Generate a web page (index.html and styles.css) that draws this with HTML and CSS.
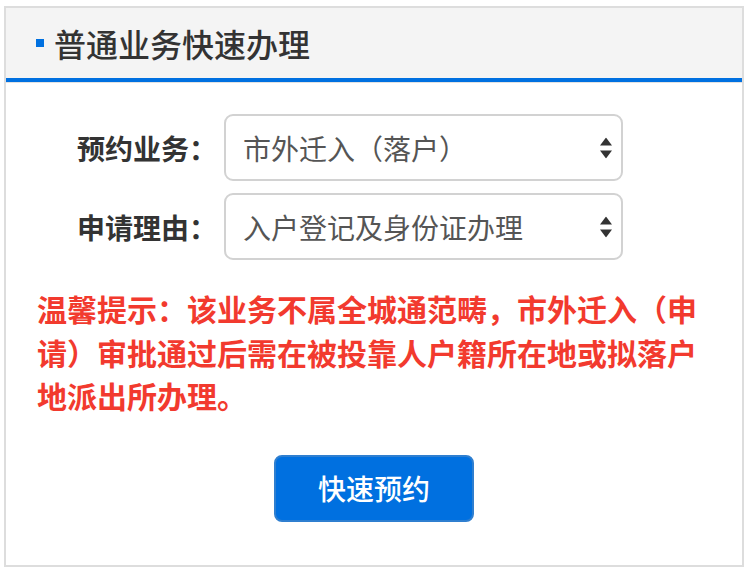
FILE: index.html
```html
<!DOCTYPE html>
<html lang="zh-CN">
<head>
    <meta charset="UTF-8">
    <meta name="viewport" content="width=device-width, initial-scale=1.0">
    <title>普通业务快速办理</title>
    <link rel="stylesheet" href="styles.css">
</head>
<body>
    <div class="panel">
        <!-- 标题 -->
        <div class="panel-head">
            <span class="mark"></span>
            <h2>普通业务快速办理</h2>
        </div>

        <div class="panel-body">
            <form class="booking">
                <div class="row">
                    <label for="business">预约业务：</label>
                    <div class="select-wrap">
                        <select id="business" name="business">
                            <option>市外迁入（落户）</option>
                        </select>
                        <svg class="arrows" width="12" height="21" viewBox="0 0 12 21">
                            <polygon points="0,8 6,0 12,8"/>
                            <polygon points="0,13 12,13 6,21"/>
                        </svg>
                    </div>
                </div>
                <div class="row">
                    <label for="reason">申请理由：</label>
                    <div class="select-wrap">
                        <select id="reason" name="reason">
                            <option>入户登记及身份证办理</option>
                        </select>
                        <svg class="arrows" width="12" height="21" viewBox="0 0 12 21">
                            <polygon points="0,8 6,0 12,8"/>
                            <polygon points="0,13 12,13 6,21"/>
                        </svg>
                    </div>
                </div>
            </form>

            <p class="tip">温馨提示：该业务不属全城通范畴，市外迁入（申请）审批通过后需在被投靠人户籍所在地或拟落户地派出所办理。</p>

            <div class="actions">
                <button type="button" class="btn">快速预约</button>
            </div>
        </div>
    </div>
</body>
</html>
```

FILE: styles.css
```css
body {
    margin: 0;
    padding: 6px 6px 0 4px;
    background: #fff;
    color: #333;
    font-family: "Noto Sans CJK SC", "Noto Sans", sans-serif;
}

.panel {
    border: 2px solid #ddd;
    background: #fff;
}

.panel-head {
    display: flex;
    align-items: center;
    height: 70px;
    padding-left: 30px;
    background: #f4f4f4;
    border-bottom: 4px solid #0070e0;
    box-shadow: 0 1px 0 #e2e2e2;
}

.mark {
    width: 8px;
    height: 8px;
    background: #0070e0;
    margin-right: 10px;
}

.panel-head h2 {
    margin: 0;
    font-size: 32px;
    font-weight: 500;
    color: #333;
    line-height: 1;
}

.panel-body {
    padding: 32px 31px 43px 31px;
}

.booking {
    padding-left: 40px;
}

.row {
    display: flex;
    align-items: center;
    margin-bottom: 12px;
}

.row:last-child {
    margin-bottom: 0;
}

.row label {
    width: 140px;
    margin-right: 7px;
    font-size: 28px;
    font-weight: bold;
    color: #333;
}

.select-wrap {
    position: relative;
    width: 399px;
}

.select-wrap select {
    -webkit-appearance: none;
    appearance: none;
    width: 100%;
    height: 67px;
    box-sizing: border-box;
    padding: 0 40px 0 17px;
    border: 2px solid #d2d2d2;
    border-radius: 9px;
    background: #fff;
    font-family: inherit;
    font-size: 28px;
    color: #555;
    outline: none;
}

.arrows {
    position: absolute;
    right: 11px;
    top: 50%;
    transform: translateY(-50%);
    fill: #333;
    pointer-events: none;
}

.tip {
    margin: 27px 0 0 0;
    font-size: 30px;
    line-height: 43.5px;
    font-weight: bold;
    color: #f23a2e;
}

.actions {
    margin-top: 37px;
    display: flex;
    justify-content: center;
}

.btn {
    width: 200px;
    height: 67px;
    border: 2px solid #2f7fd0;
    border-radius: 8px;
    background: #0070e0;
    color: #fff;
    font-family: inherit;
    font-size: 28px;
    font-weight: 500;
    cursor: pointer;
}
```
